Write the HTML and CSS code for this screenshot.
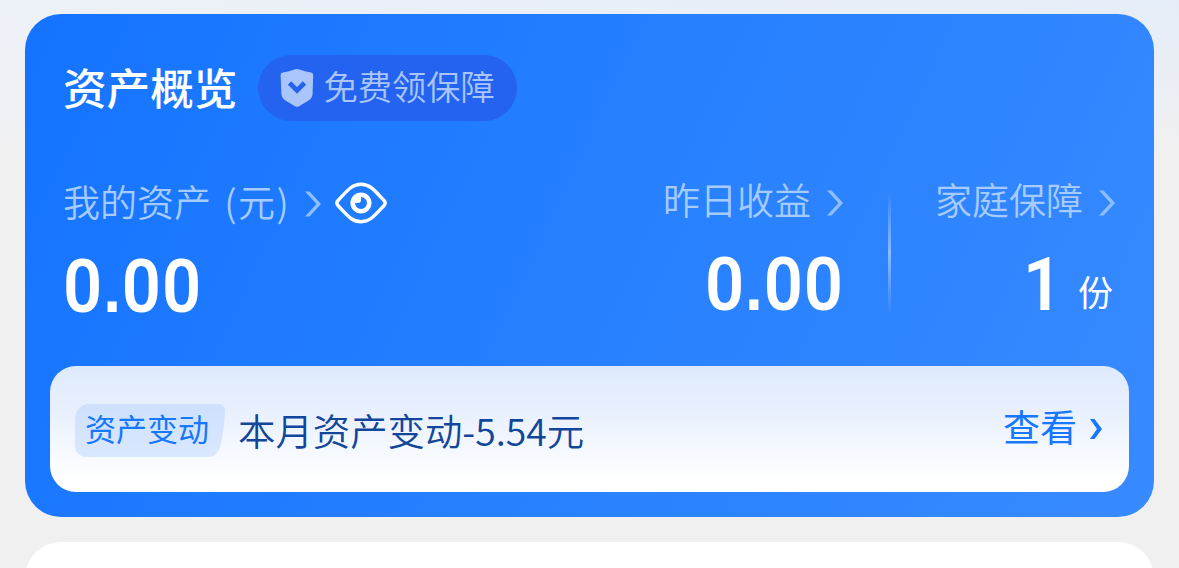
FILE: index.html
```html
<!DOCTYPE html>
<html lang="zh-CN">
<head>
    <meta charset="UTF-8">
    <meta name="viewport" content="width=device-width, initial-scale=1.0">
    <title>资产概览</title>
    <link rel="stylesheet" href="styles.css">
</head>
<body>
    <div class="card">
        <div class="header">
            <div class="title">资产概览</div>
            <div class="pill">
                <svg class="shield" width="34" height="40" viewBox="0 0 34 40">
                    <path d="M14.5 1.6Q17 .4 19.5 1.6Q24.500 3.800 31 4.500Q33.200 4.800 33.200 7L32.600 26Q32.300 30 29 32.300L19 38.300Q17 39.400 15 38.300L5 32.300Q1.700 30 1.400 26L.6 7Q.6 4.800 2.800 4.500Q9.500 3.800 14.500 1.600Z" fill="#a9c5fb"/>
                    <path d="M9.500 15L17 22.500L24.500 15" fill="none" stroke="#2463ef" stroke-width="4.600"/>
                </svg>
                <span>免费领保障</span>
            </div>
        </div>

        <div class="stats">
            <div class="stat total">
                <div class="label">
                    <span>我的资产 <span class="yuan">(元)</span></span>
                    <svg class="arrow" width="18" height="28" viewBox="0 0 18 28"><path d="M1 1.500H5.500L17 14L5.500 26.500H1L12.500 14Z"/></svg>
                    <svg class="eye" width="52" height="42" viewBox="0 0 52 42" fill="none" stroke="#fff">
                        <path d="M3 18.500C9 12 12 8.500 16 5.500C22 1.200 30 1.200 36 5.500C40 8.500 43 12 49 18.500Q51.300 21 49 23.500C43 30 40 33.500 36 36.500C30 40.800 22 40.800 16 36.500C12 33.500 9 30 3 23.500Q.7 21 3 18.500Z" stroke-width="3.400"/>
                        <circle cx="26" cy="21" r="8.300" stroke-width="4.600"/>
                        <path d="M19 14H26V18Q26 21 23 21H19Z" fill="#fff" stroke="none"/>
                    </svg>
                </div>
                <div class="number">0<span class="dot">.</span>00</div>
            </div>
            <div class="stat income">
                <div class="label">
                    <span>昨日收益</span>
                    <svg class="arrow" width="18" height="28" viewBox="0 0 18 28"><path d="M1 1.500H5.500L17 14L5.500 26.500H1L12.500 14Z"/></svg>
                </div>
                <div class="number">0<span class="dot">.</span>00</div>
            </div>
            <div class="divider"></div>
            <div class="stat family">
                <div class="label">
                    <span>家庭保障</span>
                    <svg class="arrow" width="18" height="28" viewBox="0 0 18 28"><path d="M1 1.500H5.500L17 14L5.500 26.500H1L12.500 14Z"/></svg>
                </div>
                <div class="count">
                    <div class="number">1</div>
                    <div class="unit">份</div>
                </div>
            </div>
        </div>

        <div class="notice">
            <div class="tag">
                <svg class="tag-bg" width="150" height="53" viewBox="0 0 150 53">
                    <defs>
                        <linearGradient id="tagFill" x1="0" y1="0" x2="0" y2="1">
                            <stop offset="0" stop-color="#cde0fc"/>
                            <stop offset="1" stop-color="#dae8fe"/>
                        </linearGradient>
                    </defs>
                    <path d="M12 0H143Q150 0 150 7Q149 28 145 43Q142 53 133 53H9Q0 50 0 42V13Q2 2 12 0Z" fill="url(#tagFill)"/>
                </svg>
                <span>资产变动</span>
            </div>
            <div class="message">本月资产变动-5.54元</div>
            <div class="view">
                <span>查看</span>
                <svg width="12" height="20" viewBox="0 0 12 20"><path d="M0 0H4.500L12 10L4.500 20H0L7 10Z" fill="#1677ff"/></svg>
            </div>
        </div>
    </div>

    <div class="next-card"></div>
</body>
</html>
```
FILE: styles.css
```css
* {
    box-sizing: border-box;
}

body {
    margin: 0;
    height: 568px;
    padding: 14px 25px 0;
    overflow: hidden;
    font-family: "Noto Sans CJK SC", sans-serif;
    background: linear-gradient(180deg, rgba(240, 240, 241, 0) 0, #f0f0f1 150px), linear-gradient(90deg, #edf1f8, #e5edf8);
}

.card {
    height: 503px;
    padding: 41px 25px 25px;
    border-radius: 36px;
    background: linear-gradient(115deg, #1473ff 0%, #2680ff 50%, #388aff 100%);
    color: #fff;
}

/* only the top of the next card is on screen */
.next-card {
    height: 26px;
    margin-top: 25px;
    background: #fff;
    clip-path: inset(0 0 -54px 0 round 36px);
}

.header {
    display: flex;
    align-items: center;
    height: 66px;
    padding-left: 13px;
}

.title {
    font-size: 43.6px;
    font-weight: 500;
    line-height: 66px;
    padding-bottom: 4px;
}

.pill {
    display: flex;
    align-items: center;
    width: 259px;
    height: 66px;
    margin-left: 21px;
    padding-left: 22px;
    border-radius: 33px;
    background: #2463ef;
    color: #a9c5fb;
    font-size: 34.3px;
    font-weight: 350;
    line-height: 60px;
    white-space: nowrap;
}

.pill span {
    padding-bottom: 6px;
    margin-left: 9px;
}

.stats {
    display: flex;
    height: 245px;
    padding: 56px 13px 0;
}

.label {
    display: flex;
    align-items: center;
    height: 50px;
    color: #a5cbff;
    font-size: 37px;
    font-weight: 350;
    line-height: 50px;
    white-space: nowrap;
}

.label > span {
    padding-bottom: 6px;
}

.yuan {
    margin-left: 5px;
    letter-spacing: 1.5px;
}

.arrow {
    margin: 2px 0 0 15px;
    fill: #8fbeff;
}

.number {
    font-family: Roboto, sans-serif;
    font-size: 75px;
    font-weight: 600;
    line-height: 80px;
    letter-spacing: 1px;
    margin-top: 17px;
    transform: scaleX(.915);
    transform-origin: left;
}

.dot {
    font-family: "Liberation Sans", sans-serif;
    font-weight: 700;
    font-size: 70px;
    line-height: 1;
}

.total {
    flex: 1;
    padding-top: 2px;
}

.total .arrow {
    margin: 0 0 0 14px;
}

.eye {
    margin: 0 0 3px 13px;
}

.income .label,
.family .label {
    justify-content: flex-end;
}

.income .number {
    text-align: right;
    transform-origin: right;
}

.count {
    display: flex;
    justify-content: flex-end;
}

.divider {
    width: 3px;
    height: 124px;
    margin: 14px 44px 0;
    background: linear-gradient(180deg, rgba(255, 255, 255, 0), rgba(255, 255, 255, .45) 50%, rgba(255, 255, 255, 0));
}

.unit {
    font-size: 35px;
    line-height: 50px;
    margin: 39px 3px 0 11px;
}

.notice {
    display: flex;
    align-items: center;
    height: 126px;
    padding: 0 27px 0 25px;
    border-radius: 26px;
    background: linear-gradient(180deg, #deeafc, #e8f0fe 35%, #fff 92%);
}

.tag {
    position: relative;
    width: 150px;
    height: 53px;
    margin-top: 2px;
    padding-left: 10px;
    color: #1677ff;
    font-size: 31px;
    line-height: 48px;
}

.tag-bg {
    position: absolute;
    left: 0;
    top: 0;
}

.tag span {
    position: relative;
}

.message {
    flex: 1;
    margin-left: 13px;
    padding-top: 2px;
    color: #12469b;
    font-size: 37.4px;
    font-weight: 350;
}

.view {
    display: flex;
    align-items: center;
    gap: 13px;
    color: #1677ff;
    font-size: 37px;
    line-height: 50px;
}

.view span {
    padding-bottom: 7px;
}
```
